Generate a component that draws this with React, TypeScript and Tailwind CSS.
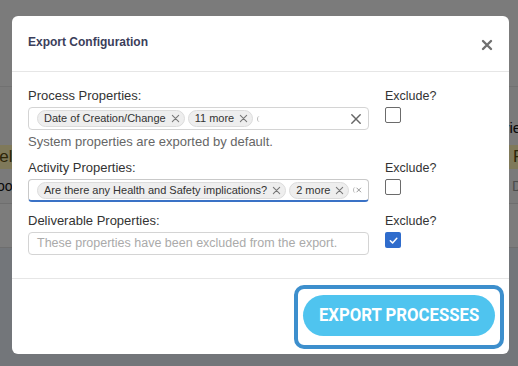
import React from 'react';

const XIcon = ({ className }: { className?: string }) => (
  <svg viewBox="0 0 10 10" className={className} fill="none" stroke="currentColor" strokeWidth="1.2" strokeLinecap="round">
    <path d="M1.5 1.5 L8.5 8.5 M8.5 1.5 L1.5 8.5" />
  </svg>
);

const Chip = ({ label }: { label: string }) => (
  <span className="inline-flex items-center gap-[5px] h-[17px] rounded-full border border-[#dcdcdc] bg-[#eeeeee] pl-[6px] pr-[4px] text-[11px] leading-none text-[#333] whitespace-nowrap">
    {label}
    <XIcon className="w-[9px] h-[9px] text-[#777]" />
  </span>
);

const Checkbox = ({ checked }: { checked?: boolean }) =>
  checked ? (
    <div className="w-[16px] h-[16px] rounded-[2px] bg-[#2f6ccc] flex items-center justify-center">
      <svg viewBox="0 0 12 12" className="w-[11px] h-[11px]" fill="none" stroke="white" strokeWidth="1.6" strokeLinecap="round" strokeLinejoin="round">
        <path d="M2.5 6.2 L5 8.6 L9.6 3.6" />
      </svg>
    </div>
  ) : (
    <div className="w-[16px] h-[16px] rounded-[2px] border-[1.5px] border-[#6b6b6b] bg-white" />
  );

const Field = ({
  label,
  chips,
  placeholder,
  focused,
  checked,
  helper,
}: {
  label: string;
  chips?: string[];
  placeholder?: string;
  focused?: boolean;
  checked?: boolean;
  helper?: string;
}) => (
  <div className="flex gap-[16px]">
    <div className="w-[341px]">
      <div className="text-[13px] leading-[16px] text-[#333] mb-[3px]">{label}</div>
      <div
        className={
          focused
            ? 'h-[23px] rounded-[4px] border border-[#c9c9c9] border-b-2 border-b-[#3a72c6] flex items-center pl-[8px] pr-[6px]'
            : 'h-[23px] rounded-[4px] border border-[#d4d4d4] flex items-center pl-[8px] pr-[6px]'
        }
      >
        {chips ? (
          <>
            <div className="flex items-center gap-[3px] flex-1">
              {chips.map((c) => (
                <Chip key={c} label={c} />
              ))}
              <span className="ml-[1px] w-[3px] h-[6px] rounded-l-full border-l border-[#bbb]" />
            </div>
            <XIcon className="w-[12px] h-[12px] text-[#666]" />
          </>
        ) : (
          <span className="text-[12.5px] text-[#aaa] whitespace-nowrap">{placeholder}</span>
        )}
      </div>
      {helper && <div className="mt-[4px] text-[13px] leading-[15px] text-[#666]">{helper}</div>}
    </div>
    <div>
      <div className="text-[12.5px] leading-[16px] text-[#333] mb-[3px]">Exclude?</div>
      <Checkbox checked={checked} />
    </div>
  </div>
);

const App = () => {
  return (
    <div className="relative w-[518px] h-[366px] overflow-hidden font-['Liberation_Sans',Arial,sans-serif]">
      {/* page behind the dialog */}
      <div className="flex flex-col h-full bg-[#f4f4f4]">
        <div className="h-[87px] bg-[#f6f6f6] border-b border-[#e2e2e2]" />
        <div className="h-[58px] flex items-end justify-end pb-[6px] text-[15px] text-[#111]">
          <span className="-mr-[14px]">Review</span>
        </div>
        <div className="h-[24px] bg-[#fff3b5] flex items-center justify-between text-[17px] text-[#5a4c10]">
          <span className="-ml-[12px]">Select</span>
          <span className="-mr-[12px]">Pr</span>
        </div>
        <div className="h-[35px] flex items-center justify-between text-[14px] border-b border-[#ddd]">
          <span className="-ml-[10px] text-[#111]">Tool</span>
          <span className="-mr-[12px] text-[#999]">Do</span>
        </div>
        <div className="h-[44px] bg-[#f8f8f8] border-b border-[#ddd]" />
        <div className="flex-1 bg-[#e6ecf4]" />
      </div>

      {/* overlay */}
      <div className="absolute inset-0 bg-black/50 pt-[16px] pl-[12px]">
        <div className="w-[497px] h-[338px] bg-white rounded-[6px] flex flex-col">
          <div className="h-[56px] flex items-center justify-between pl-[16px] pr-[16px] border-b border-[#e6e6e6]">
            <h2 className="text-[12px] font-bold text-[#3b3e5a] mb-[3px]">Export Configuration</h2>
            <svg viewBox="0 0 12 12" className="w-[12px] h-[12px] mt-[2px] text-[#6f6f6f]" fill="none" stroke="currentColor" strokeWidth="2.4" strokeLinecap="round">
              <path d="M2 2 L10 10 M10 2 L2 10" />
            </svg>
          </div>
          <div className="flex flex-col gap-[11px] pt-[16px] pl-[16px] h-[207px] border-b border-[#e6e6e6]">
            <Field
              label="Process Properties:"
              chips={['Date of Creation/Change', '11 more']}
              helper="System properties are exported by default."
            />
            <Field
              label="Activity Properties:"
              chips={['Are there any Health and Safety implications?', '2 more']}
              focused
            />
            <Field
              label="Deliverable Properties:"
              placeholder="These properties have been excluded from the export."
              checked
            />
          </div>
          <div className="flex-1 flex items-center justify-end pr-[5px]">
            <div className="rounded-[10px] border-4 border-[#3d8fcd] pt-[6px] pb-[9px] px-[5px]">
              <button className="h-[41px] w-[192px] rounded-full bg-[#4fc4ef] text-white font-bold text-[19px] whitespace-nowrap font-['Roboto',sans-serif] flex items-center justify-center">
                <span className="inline-block scale-x-[0.88]">EXPORT PROCESSES</span>
              </button>
            </div>
          </div>
        </div>
      </div>
    </div>
  );
};

export default App;
